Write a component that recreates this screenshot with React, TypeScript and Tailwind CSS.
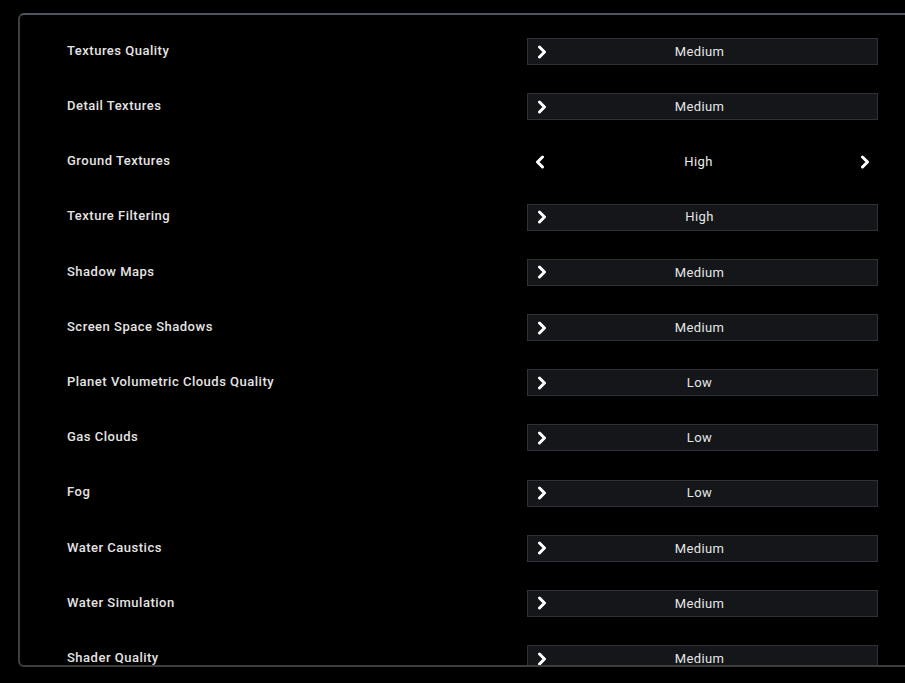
type Setting = {
  label: string;
  value: string;
  open?: boolean;
};

const settings: Setting[] = [
  { label: 'Textures Quality', value: 'Medium' },
  { label: 'Detail Textures', value: 'Medium' },
  { label: 'Ground Textures', value: 'High', open: true },
  { label: 'Texture Filtering', value: 'High' },
  { label: 'Shadow Maps', value: 'Medium' },
  { label: 'Screen Space Shadows', value: 'Medium' },
  { label: 'Planet Volumetric Clouds Quality', value: 'Low' },
  { label: 'Gas Clouds', value: 'Low' },
  { label: 'Fog', value: 'Low' },
  { label: 'Water Caustics', value: 'Medium' },
  { label: 'Water Simulation', value: 'Medium' },
  { label: 'Shader Quality', value: 'Medium' },
];

function Chevron({ left = false }: { left?: boolean }) {
  return (
    <svg width="10" height="14" viewBox="0 0 10 14" className="shrink-0">
      <polyline
        points={left ? '7.5,2 2.5,7 7.5,12' : '2.5,2 7.5,7 2.5,12'}
        fill="none"
        stroke="#ffffff"
        strokeWidth="3"
        strokeLinecap="round"
        strokeLinejoin="round"
      />
    </svg>
  );
}

function SettingControl({ item }: { item: Setting }) {
  if (item.open) {
    return (
      <div className="flex items-center h-[27px] mt-[2px] px-[8px]">
        <Chevron left />
        <span className="flex-1 text-center text-[13px] text-[#ececec] tracking-[0.4px] pr-[8px]">{item.value}</span>
        <Chevron />
      </div>
    );
  }

  return (
    <div className="flex items-center h-[27px] mt-[2px] px-[9px] bg-[#141619] border border-[#2e3135]">
      <Chevron />
      <span className="flex-1 text-center text-[13px] text-[#e6e6e6] tracking-[0.4px] pr-[16px]">{item.value}</span>
    </div>
  );
}

export default function App() {
  return (
    <div
      className="w-screen h-screen overflow-hidden bg-black pt-[13px] pl-[18px]"
      style={{ fontFamily: 'Roboto, sans-serif' }}
    >
      <div className="w-[900px] h-[654px] overflow-hidden rounded-l-[6px] border-2 border-r-0 border-t-[#4a5561] border-l-[#3d4147] border-b-[#3c3d3f] pt-[8px] pl-[47px]">
        {settings.map((item) => (
          <div key={item.label} className="grid grid-cols-[460px_351px] items-center h-[55.2px]">
            <span className="text-[13px] font-medium text-[#e4e4e4] tracking-[0.5px]">{item.label}</span>
            <SettingControl item={item} />
          </div>
        ))}
      </div>
    </div>
  );
}
